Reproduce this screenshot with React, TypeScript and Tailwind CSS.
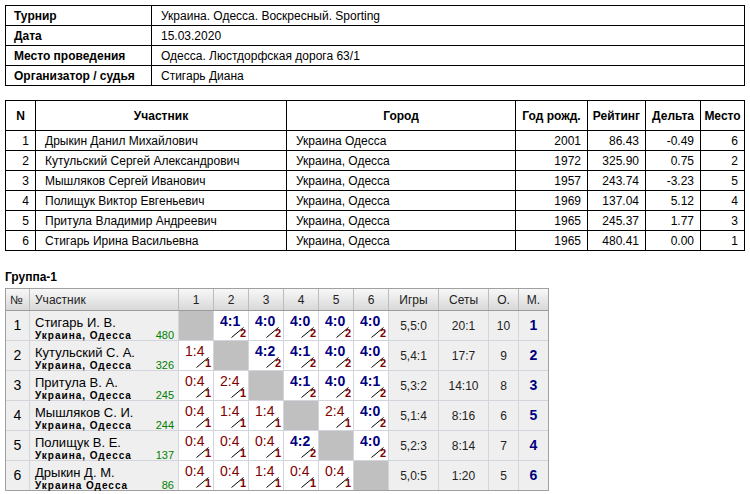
import React from "react";

const info: [string, string][] = [
  ["Турнир", "Украина. Одесса. Воскресный. Sporting"],
  ["Дата", "15.03.2020"],
  ["Место проведения", "Одесса. Люстдорфская дорога 63/1"],
  ["Организатор / судья", "Стигарь Диана"],
];

const players = [
  ["1", "Дрыкин Данил Михайлович", "Украина Одесса", "2001", "86.43", "-0.49", "6"],
  ["2", "Кутульский Сергей Александрович", "Украина, Одесса", "1972", "325.90", "0.75", "2"],
  ["3", "Мышляков Сергей Иванович", "Украина, Одесса", "1957", "243.74", "-3.23", "5"],
  ["4", "Полищук Виктор Евгеньевич", "Украина, Одесса", "1969", "137.04", "5.12", "4"],
  ["5", "Притула Владимир Андреевич", "Украина, Одесса", "1965", "245.37", "1.77", "3"],
  ["6", "Стигарь Ирина Васильевна", "Украина, Одесса", "1965", "480.41", "0.00", "1"],
];

const pCols = [
  "w-[30px] border-r border-black",
  "w-[251px] border-r border-black",
  "w-[229px] border-r border-black",
  "w-[72px] border-r border-black",
  "w-[58px] border-r border-black",
  "w-[55px] border-r border-black",
  "w-[43px]",
];
const pHead = ["N", "Участник", "Город", "Год рожд.", "Рейтинг", "Дельта", "Место"];

type GRow = {
  n: string;
  name: string;
  city: string;
  rating: string;
  scores: (string | null)[];
  games: string;
  sets: string;
  pts: string;
  place: string;
};

const group: GRow[] = [
  { n: "1", name: "Стигарь И. В.", city: "Украина, Одесса", rating: "480", scores: [null, "4:1", "4:0", "4:0", "4:0", "4:0"], games: "5,5:0", sets: "20:1", pts: "10", place: "1" },
  { n: "2", name: "Кутульский С. А.", city: "Украина, Одесса", rating: "326", scores: ["1:4", null, "4:2", "4:1", "4:0", "4:0"], games: "5,4:1", sets: "17:7", pts: "9", place: "2" },
  { n: "3", name: "Притула В. А.", city: "Украина, Одесса", rating: "245", scores: ["0:4", "2:4", null, "4:1", "4:0", "4:1"], games: "5,3:2", sets: "14:10", pts: "8", place: "3" },
  { n: "4", name: "Мышляков С. И.", city: "Украина, Одесса", rating: "244", scores: ["0:4", "1:4", "1:4", null, "2:4", "4:0"], games: "5,1:4", sets: "8:16", pts: "6", place: "5" },
  { n: "5", name: "Полищук В. Е.", city: "Украина, Одесса", rating: "137", scores: ["0:4", "0:4", "0:4", "4:2", null, "4:0"], games: "5,2:3", sets: "8:14", pts: "7", place: "4" },
  { n: "6", name: "Дрыкин Д. М.", city: "Украина Одесса", rating: "86", scores: ["0:4", "0:4", "1:4", "0:4", "0:4", null], games: "5,0:5", sets: "1:20", pts: "5", place: "6" },
];

function ScoreCell({ s }: { s: string | null }) {
  if (s === null) {
    return <div className="w-[35px] h-full border-r border-[#d4d4dc] bg-[#c0c0c0]" />;
  }
  const win = s.startsWith("4");
  return (
    <div className="relative w-[35px] h-full border-r border-[#d4d4dc] bg-white">
      <span
        className={
          win
            ? "absolute left-[6px] top-[3px] text-[14px] leading-[14px] font-bold text-[#000080]"
            : "absolute left-[6px] top-[3px] text-[14px] leading-[14px] text-[#800000]"
        }
      >
        {s}
      </span>
      <svg className="absolute left-[17px] top-[16px]" width="13" height="11" viewBox="0 0 13 11">
        <line x1="0.5" y1="10.5" x2="12.5" y2="0.5" stroke="#000" strokeWidth="1" />
      </svg>
      <span className="absolute right-[2px] bottom-[1px] text-[11px] leading-none font-bold text-[#800000]">
        {win ? "2" : "1"}
      </span>
    </div>
  );
}

export default function App() {
  return (
    <div className="font-['Liberation_Sans',Arial,sans-serif] text-black bg-white w-[750px] h-[494px] pt-[5px] pl-[5px] overflow-hidden">
      {/* Info table */}
      <div className="w-[740px] border border-black text-[12px]">
        {info.map(([k, v], i) => (
          <div
            key={k}
            className={i < info.length - 1 ? "flex h-[20px] border-b border-black" : "flex h-[19px]"}
          >
            <div className="w-[146px] border-r border-black pl-[8px] font-bold flex items-center">{k}</div>
            <div className="flex-1 pl-[9px] flex items-center">{v}</div>
          </div>
        ))}
      </div>

      {/* Participants table */}
      <div className="mt-[14px] w-[740px] border border-black text-[12px]">
        <div className="flex h-[30px] border-b border-black font-bold">
          {pHead.map((h, i) => (
            <div key={h} className={pCols[i] + " flex items-center justify-center"}>
              {h}
            </div>
          ))}
        </div>
        {players.map((p, r) => (
          <div
            key={p[0]}
            className={r < players.length - 1 ? "flex h-[20px] border-b border-black" : "flex h-[19px]"}
          >
            {p.map((c, i) => (
              <div
                key={i}
                className={
                  pCols[i] +
                  (i === 1 || i === 2
                    ? " flex items-center pl-[9px]"
                    : " flex items-center justify-end pr-[6px]")
                }
              >
                {c}
              </div>
            ))}
          </div>
        ))}
      </div>

      {/* Group title */}
      <div className="mt-[18px] h-[16px] flex items-center text-[12px] font-bold">Группа-1</div>

      {/* Group table */}
      <div className="mt-[3px] w-fit border border-[#a0a0a0]">
        <div className="flex h-[22px] border-b border-[#9c9c9c] bg-linear-to-b from-[#f8f8f8] to-[#d8d8d8] text-[12px] text-[#222]">
          <div className="w-[24px] border-r border-[#bcbcbc] flex items-center pl-[4px]">№</div>
          <div className="w-[149px] border-r border-[#bcbcbc] flex items-center pl-[5px]">Участник</div>
          {["1", "2", "3", "4", "5", "6"].map((h) => (
            <div key={h} className="w-[35px] border-r border-[#bcbcbc] flex items-center justify-center">
              {h}
            </div>
          ))}
          <div className="w-[50px] border-r border-[#bcbcbc] flex items-center justify-center">Игры</div>
          <div className="w-[50px] border-r border-[#bcbcbc] flex items-center justify-center">Сеты</div>
          <div className="w-[30px] border-r border-[#bcbcbc] flex items-center justify-center">О.</div>
          <div className="w-[29px] flex items-center justify-center">М.</div>
        </div>
        {group.map((g, r) => (
          <div
            key={g.n}
            className={
              r < group.length - 1
                ? "flex h-[30px] border-b border-[#d4d4dc] bg-[#efefef]"
                : "flex h-[29px] bg-[#efefef]"
            }
          >
            <div className="w-[24px] h-full border-r border-[#d4d4dc] flex items-center justify-center text-[14px]">
              {g.n}
            </div>
            <div className="w-[149px] h-full border-r border-[#d4d4dc] pl-[5px] pr-[4px] pt-[5px]">
              <div className="text-[13px] leading-[14px]">{g.name}</div>
              <div className="flex justify-between items-baseline leading-[10px]">
                <span className="text-[10px] font-bold tracking-[1px]">{g.city}</span>
                <span className="text-[11px] text-[#008000]">{g.rating}</span>
              </div>
            </div>
            {g.scores.map((s, i) => (
              <ScoreCell key={i} s={s} />
            ))}
            <div className="w-[50px] h-full border-r border-[#d4d4dc] flex items-center justify-center text-[12px] text-[#222]">
              {g.games}
            </div>
            <div className="w-[50px] h-full border-r border-[#d4d4dc] flex items-center justify-center text-[12px] text-[#222]">
              {g.sets}
            </div>
            <div className="w-[30px] h-full border-r border-[#d4d4dc] flex items-center justify-center text-[12px] text-[#222]">
              {g.pts}
            </div>
            <div className="w-[29px] h-full flex items-center justify-center text-[14px] font-bold text-[#000080]">
              {g.place}
            </div>
          </div>
        ))}
      </div>
    </div>
  );
}
